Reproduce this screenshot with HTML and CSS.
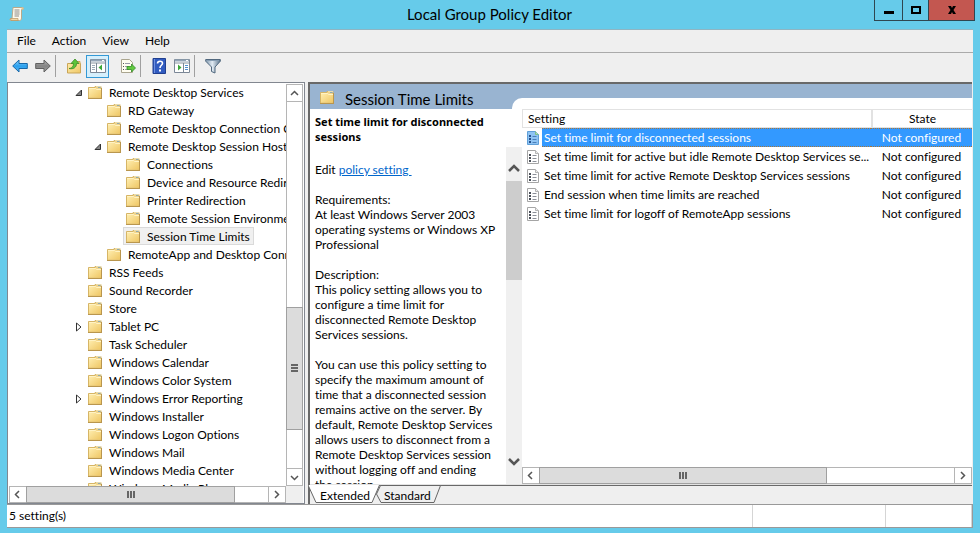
FILE: index.html
```html
<!DOCTYPE html>
<html lang="en">
<head>
<meta charset="utf-8">
<title>Local Group Policy Editor</title>
<link rel="stylesheet" href="styles.css">
</head>
<body>
<svg class="defs" aria-hidden="true">
  <defs>
    <linearGradient id="gold" x1="0" y1="0" x2="1" y2="1"><stop offset="0" stop-color="#ffeeb0"/><stop offset="1" stop-color="#efc765"/></linearGradient>
    <linearGradient id="blue" x1="0" y1="0" x2="0" y2="1"><stop offset="0" stop-color="#8fd8ff"/><stop offset=".5" stop-color="#2ba0ee"/><stop offset="1" stop-color="#55b8f5"/></linearGradient>
    <linearGradient id="grey" x1="0" y1="0" x2="0" y2="1"><stop offset="0" stop-color="#b5b5b5"/><stop offset=".5" stop-color="#848484"/><stop offset="1" stop-color="#a0a0a0"/></linearGradient>
    <linearGradient id="steel" x1="0" y1="0" x2="1" y2="0"><stop offset="0" stop-color="#7e95ab"/><stop offset=".45" stop-color="#e2ebf3"/><stop offset="1" stop-color="#5b748c"/></linearGradient>
    <symbol id="folder" viewBox="0 0 16 16">
      <path d="M1.500 3.500h6.500v-1h6v11.500h-12.500z" fill="#f0d48c" stroke="#d6b566"/>
      <path d="M9 2.500h5" stroke="#e9dcae"/>
      <path d="M11 3.500h2.500" stroke="#8fa9ae"/>
      <path d="M2 4h7l1 1h4v8.500H2z" fill="url(#gold)"/>
      <path d="M2 4.500h6.500l1 1H14" fill="none" stroke="#fff3c4"/>
      <path d="M1 14.500h14M14.500 4v10" stroke="#b9964e"/>
    </symbol>
    <symbol id="policy" viewBox="0 0 14 16">
      <path d="M1.500 1.500h8l3 3v10h-11z" fill="#fff" stroke="#a5a5a5"/>
      <path d="M9.500 1.500v3h3" fill="#eee" stroke="#b5b5b5"/>
      <path d="M3 5h2v2H3zM3 8h2v2H3zM3 11h2v2H3z" fill="#4a4f58"/>
      <path d="M6.500 6.500h4M6.500 9.500h4M6.500 12.500h4" stroke="#8b8f98"/>
    </symbol>
    <symbol id="policy-picked" viewBox="0 0 14 16">
      <path d="M1.500 1.500h8l3 3v10h-11z" fill="#8ec3f3" stroke="#5f9fd8"/>
      <path d="M9.500 1.500v3h3" fill="#b7e0b0" stroke="#7cc08a"/>
      <path d="M3 5h2v2H3zM3 8h2v2H3zM3 11h2v2H3z" fill="#24508a"/>
      <path d="M6.500 6.500h4M6.500 9.500h4M6.500 12.500h4" stroke="#4a7fb8"/>
    </symbol>
    <symbol id="up" viewBox="0 0 15 15"><path d="M4 9l3.500-3.500L11 9" fill="none" stroke="#555" stroke-width="1.500"/></symbol>
    <symbol id="down" viewBox="0 0 15 15"><path d="M4 6l3.500 3.500L11 6" fill="none" stroke="#555" stroke-width="1.500"/></symbol>
    <symbol id="left" viewBox="0 0 15 15"><path d="M9 4L5.500 7.500 9 11" fill="none" stroke="#555" stroke-width="1.500"/></symbol>
    <symbol id="right" viewBox="0 0 15 15"><path d="M6 4l3.500 3.500L6 11" fill="none" stroke="#555" stroke-width="1.500"/></symbol>
    <symbol id="open" viewBox="0 0 8 10"><path d="M1 7.500L6.500 2v5.500z" fill="#888" stroke="#333"/></symbol>
    <symbol id="closed" viewBox="0 0 8 10"><path d="M1.500 1v8L6 5z" fill="#fff" stroke="#333"/></symbol>
  </defs>
</svg>

<header class="titlebar">
  <svg class="app-icon" viewBox="0 0 16 16">
    <path d="M4 1.500h9.500c1.500 0 1.500 2 0 2h-1V12c0 2-1 2.500-2 2.500H2c-1.500 0-1.500-2 0-2h1z" fill="#fdf8ea" stroke="#b9a98b"/>
    <path d="M1.500 12.500h7.500v2H2z" fill="#f1d8a8" stroke="#b79561" stroke-width=".7"/>
    <path d="M5.500 4h5M5.500 6h5M5.500 8h5M5.500 10h4.500" stroke="#8b8b8b"/>
    <path d="M12.500 3.500h1.500l.5-1.500-1-.5h-1z" fill="#e6c68d"/>
  </svg>
  <h1>Local Group Policy Editor</h1>
  <div class="window-buttons">
    <button aria-label="Minimize"><svg viewBox="0 0 12 12"><path d="M1 8.500h10" stroke="#000" stroke-width="3"/></svg></button>
    <button aria-label="Maximize"><svg viewBox="0 0 12 12"><path d="M2 3h8v6H2z" fill="none" stroke="#000" stroke-width="2"/></svg></button>
    <button class="close" aria-label="Close"><svg viewBox="0 0 12 12"><path d="M2 2h3l1 2 1-2h3L7.500 6 10 10H7L6 8l-1 2H2l2.500-4z"/></svg></button>
  </div>
</header>

<main class="window">
  <nav class="menubar">
    <button>File</button><button>Action</button><button>View</button><button>Help</button>
  </nav>
  <div class="toolbar">
    <button aria-label="Back"><svg viewBox="0 0 16 16"><path d="M.7 8L7 2v3.500h8.300v5H7V14z" fill="url(#blue)" stroke="#1767a8"/></svg></button>
    <button aria-label="Forward"><svg viewBox="0 0 16 16"><path d="M15.300 8L9 2v3.500H.7v5H9V14z" fill="url(#grey)" stroke="#606060"/></svg></button>
    <i class="sep"></i>
    <button aria-label="Up one level"><svg viewBox="0 0 16 16"><path d="M1.500 5.500h6l1-2H14v2h.5V15h-13z" fill="url(#gold)" stroke="#c9a558"/><path d="M3 10.500c3 0 4.500-2 4.500-5H5L9 1l4 4.500h-2.500c0 4-3 6-7.500 5z" fill="#5cc53a" stroke="#3b8d24" stroke-width=".8"/></svg></button>
    <button class="active" aria-label="Show console tree"><svg viewBox="0 0 16 16"><path d="M.5 1.500h15v13H.5z" fill="#fff" stroke="#7b8796"/><path d="M1 2.500h14" stroke="#93a4b7" stroke-width="2"/><path d="M1 5h14" stroke="#8793a0"/><path d="M6.500 5v9" stroke="#7b8796"/><path d="M2 7.500h3M2 9.500h3M2 11.500h3" stroke="#9caab7"/><path d="M12 6.500v6L8.500 9.500z" fill="#3ba738"/><path d="M12 2.500h2" stroke="#fff"/></svg></button>
    <button class="export" aria-label="Export list"><svg viewBox="0 0 16 16"><path d="M1.500 1.500h8l3 3v10h-11z" fill="#fffdf0" stroke="#aaa58f"/><path d="M3 5.500h1M3 8.500h1M3 11.500h1" stroke="#555"/><path d="M5 5.500h5M5 8.500h4M5 11.500h4" stroke="#999ba8"/><path d="M7 8.500h4.500V6L15.500 10l-4 4v-2.500H7z" fill="#62ca3f" stroke="#338b26" stroke-width=".8"/></svg></button>
    <i class="sep"></i>
    <button aria-label="Help"><svg viewBox="0 0 16 16"><path d="M2 .500h12.500v15H2z" fill="#315bc0" stroke="#203f8f"/><path d="M3.500 1v14" stroke="#6e90e0"/><path d="M6.500 5.500c0-3 5-3 5-.2 0 2-2.500 2-2.500 4.700" fill="none" stroke="#fff" stroke-width="1.600"/><path d="M8 11.500h2v2H8z" fill="#fff"/></svg></button>
    <button aria-label="Show action pane"><svg viewBox="0 0 16 16"><path d="M.5 1.500h15v13H.5z" fill="#fff" stroke="#7b8796"/><path d="M1 2.500h14" stroke="#93a4b7" stroke-width="2"/><path d="M1 5h14" stroke="#8793a0"/><path d="M9.500 5v9" stroke="#7b8796"/><path d="M11 7.500h3M11 9.500h3M11 11.500h3" stroke="#4f8fd0"/><path d="M4 6.500v6l3.500-3z" fill="#3ba738"/><path d="M12 2.500h2" stroke="#fff"/></svg></button>
    <i class="sep"></i>
    <button aria-label="Filter"><svg viewBox="0 0 16 16"><path d="M.7 1.500h14.600v1.700L10 9v6l-3.500-1.500V9L.7 3.200z" fill="url(#steel)" stroke="#51687e"/><path d="M2 2.500h12" stroke="#879db2"/></svg></button>
  </div>

  <div class="panes">
    <section class="tree-pane">
      <div class="tree-row">
        <ul class="tree">
          <li><svg class="twist"><use href="#open"/></svg><svg class="ico"><use href="#folder"/></svg><span>Remote Desktop Services</span></li>
          <li class="l1"><svg class="ico"><use href="#folder"/></svg><span>RD Gateway</span></li>
          <li class="l1"><svg class="ico"><use href="#folder"/></svg><span>Remote Desktop Connection Client</span></li>
          <li class="l1"><svg class="twist"><use href="#open"/></svg><svg class="ico"><use href="#folder"/></svg><span>Remote Desktop Session Host</span></li>
          <li class="l2"><svg class="ico"><use href="#folder"/></svg><span>Connections</span></li>
          <li class="l2"><svg class="ico"><use href="#folder"/></svg><span>Device and Resource Redirection</span></li>
          <li class="l2"><svg class="ico"><use href="#folder"/></svg><span>Printer Redirection</span></li>
          <li class="l2"><svg class="ico"><use href="#folder"/></svg><span>Remote Session Environment</span></li>
          <li class="l2 selected"><div><svg class="ico"><use href="#folder"/></svg><span>Session Time Limits</span></div></li>
          <li class="l1"><svg class="ico"><use href="#folder"/></svg><span>RemoteApp and Desktop Connections</span></li>
          <li><svg class="ico"><use href="#folder"/></svg><span>RSS Feeds</span></li>
          <li><svg class="ico"><use href="#folder"/></svg><span>Sound Recorder</span></li>
          <li><svg class="ico"><use href="#folder"/></svg><span>Store</span></li>
          <li><svg class="twist"><use href="#closed"/></svg><svg class="ico"><use href="#folder"/></svg><span>Tablet PC</span></li>
          <li><svg class="ico"><use href="#folder"/></svg><span>Task Scheduler</span></li>
          <li><svg class="ico"><use href="#folder"/></svg><span>Windows Calendar</span></li>
          <li><svg class="ico"><use href="#folder"/></svg><span>Windows Color System</span></li>
          <li><svg class="twist"><use href="#closed"/></svg><svg class="ico"><use href="#folder"/></svg><span>Windows Error Reporting</span></li>
          <li><svg class="ico"><use href="#folder"/></svg><span>Windows Installer</span></li>
          <li><svg class="ico"><use href="#folder"/></svg><span>Windows Logon Options</span></li>
          <li><svg class="ico"><use href="#folder"/></svg><span>Windows Mail</span></li>
          <li><svg class="ico"><use href="#folder"/></svg><span>Windows Media Center</span></li>
          <li><svg class="ico"><use href="#folder"/></svg><span>Windows Media Player</span></li>
        </ul>
        <div class="vbar">
          <button aria-label="Scroll up"><svg><use href="#up"/></svg></button>
          <div class="track tree-vtrack"><div class="thumb"><i class="grip"></i></div></div>
          <button aria-label="Scroll down"><svg><use href="#down"/></svg></button>
        </div>
      </div>
      <div class="tree-foot">
        <div class="hbar">
          <button aria-label="Scroll left"><svg><use href="#left"/></svg></button>
          <div class="track tree-htrack"><div class="thumb"><i class="grip"></i></div></div>
          <button aria-label="Scroll right"><svg><use href="#right"/></svg></button>
        </div>
      </div>
    </section>

    <section class="detail-pane">
      <div class="band">
        <h2><svg class="ico"><use href="#folder"/></svg>Session Time Limits</h2>
        <div class="tongue"></div>
      </div>
      <div class="detail">
        <article class="info">
          <h3>Set time limit for disconnected<br>sessions</h3>
          <div class="scroller">
            <div class="text">
              <p>Edit <a href="#policy">policy setting&nbsp;</a></p>
              <p>Requirements:<br>At least Windows Server 2003<br>operating systems or Windows XP<br>Professional</p>
              <p>Description:<br>This policy setting allows you to<br>configure a time limit for<br>disconnected Remote Desktop<br>Services sessions.</p>
              <p>You can use this policy setting to<br>specify the maximum amount of<br>time that a disconnected session<br>remains active on the server. By<br>default, Remote Desktop Services<br>allows users to disconnect from a<br>Remote Desktop Services session<br>without logging off and ending<br>the session.</p>
            </div>
            <div class="flatbar">
              <button aria-label="Scroll text up"><svg viewBox="0 0 12 10"><path d="M1 8l5-5 5 5" fill="none" stroke="#555" stroke-width="2.500"/></svg></button>
              <div class="flat-thumb"></div>
              <button class="end" aria-label="Scroll text down"><svg viewBox="0 0 12 10"><path d="M1 2l5 5 5-5" fill="none" stroke="#555" stroke-width="2.500"/></svg></button>
            </div>
          </div>
        </article>
        <div class="list">
          <table>
            <colgroup><col class="c-icon"><col><col class="c-state"></colgroup>
            <thead><tr><th colspan="2">Setting</th><th>State</th></tr></thead>
            <tbody>
              <tr class="picked"><td><svg><use href="#policy-picked"/></svg></td><td>Set time limit for disconnected sessions</td><td>Not configured</td></tr>
              <tr><td><svg><use href="#policy"/></svg></td><td>Set time limit for active but idle Remote Desktop Services se...</td><td>Not configured</td></tr>
              <tr><td><svg><use href="#policy"/></svg></td><td>Set time limit for active Remote Desktop Services sessions</td><td>Not configured</td></tr>
              <tr><td><svg><use href="#policy"/></svg></td><td>End session when time limits are reached</td><td>Not configured</td></tr>
              <tr><td><svg><use href="#policy"/></svg></td><td>Set time limit for logoff of RemoteApp sessions</td><td>Not configured</td></tr>
            </tbody>
          </table>
          <div class="hbar">
            <button aria-label="Scroll list left"><svg><use href="#left"/></svg></button>
            <div class="track list-htrack"><div class="thumb"><i class="grip"></i></div></div>
            <button aria-label="Scroll list right"><svg><use href="#right"/></svg></button>
          </div>
        </div>
      </div>
      <div class="tabs">
        <svg class="tab-shapes" viewBox="0 0 140 18">
          <path d="M73 17.500L68.500 9l4-8.500h60L126 17.500z" fill="#efefef" stroke="#666"/>
          <path d="M0 0l8 17.500h56L71.500 0z" fill="#fff"/>
          <path d="M0 0l8 17.500h56L71.500 0" fill="none" stroke="#666"/>
        </svg>
        <button>Extended</button><button>Standard</button>
      </div>
    </section>
  </div>

  <footer class="status"><span>5 setting(s)</span><span></span><span></span></footer>
</main>
</body>
</html>
```
FILE: styles.css
```css
* { box-sizing: border-box; }

body {
  margin: 0;
  height: 100vh;
  padding: 0 7px 5px;
  display: flex;
  flex-direction: column;
  background: #66cbea;
  color: #000;
  font: 12px/15px Lato, "Open Sans", sans-serif;
  font-variant-ligatures: none;
  overflow: hidden;
}

button {
  border: 0;
  padding: 0;
  background: none;
  color: inherit;
  font: inherit;
}

svg { display: block; flex: none; }
.defs { position: absolute; width: 0; height: 0; }
ul, h1, h2, h3, p { margin: 0; padding: 0; font-weight: normal; }

/* Title bar */
.titlebar {
  height: 29px;
  flex: none;
  display: grid;
  grid-template-columns: 101px 1fr 104px;
  align-items: center;
  margin-right: -2px;
  padding-bottom: 2px;
}
.app-icon { width: 16px; height: 16px; margin-left: 2px; }
h1 { font-size: 15px; line-height: 20px; text-align: center; }
.window-buttons {
  display: flex;
  align-self: start;
  justify-self: end;
  height: 21px;
  border: 1px solid #2f4650;
  border-top: 0;
}
.window-buttons button { width: 27px; display: grid; place-items: center; }
.window-buttons button + button { width: 26px; border-left: 1px solid #2f4650; }
.window-buttons button.close { width: 46px; background: #c35750; }
.window-buttons svg { width: 12px; height: 12px; }

/* Window frame */
.window {
  flex: 1;
  min-height: 0;
  display: flex;
  flex-direction: column;
  background: #efefef;
  border-top: 1px solid #8fb5c2;
}
.menubar {
  height: 23px;
  flex: none;
  display: flex;
  gap: 16px;
  padding: 0 0 2px 10px;
  border-bottom: 1px solid #aaa;
}
.toolbar {
  height: 29px;
  flex: none;
  display: flex;
  align-items: center;
  padding: 0 1px 3px;
}
.toolbar button { width: 23px; height: 23px; display: grid; place-items: center; }
.toolbar svg { width: 16px; height: 16px; }
.toolbar .active { border: 1px solid #3399d6; background: #d5effc; margin-left: 1px; }
.toolbar .export { margin-left: 7px; }
.sep { width: 1px; height: 22px; background: #a0a0a0; margin: 0 6px 0 1px; }

.panes { flex: 1; min-height: 0; display: flex; gap: 3px; }

/* Scroll bars */
.vbar, .hbar { display: flex; flex: none; background: #fff; border: 1px solid #b5b5b5; }
.vbar { width: 17px; flex-direction: column; margin-top: 1px; }
.hbar { height: 17px; }
.vbar button { height: 16px; flex: none; }
.hbar button { width: 16px; flex: none; }
.vbar button svg, .hbar button svg { width: 15px; height: 15px; }
.track { display: flex; flex: 1; min-height: 0; }
.vbar .track { flex-direction: column; border: solid #b5b5b5; border-width: 1px 0; }
.hbar .track { border: solid #b5b5b5; border-width: 0 1px; }
.thumb { background: #dcdcdc; display: grid; place-items: center; outline: 1px solid #a0a0a0; }
.tree-vtrack .thumb { height: 33%; margin-top: 206px; }
.tree-htrack .thumb { width: 86%; }
.list-htrack .thumb { width: 69%; }
.grip { display: block; width: 8px; height: 7px; background: repeating-linear-gradient(90deg, #666 0 2px, transparent 2px 3px); }
.vbar .grip { width: 7px; height: 8px; background: repeating-linear-gradient(#666 0 2px, transparent 2px 3px); }

/* Tree */
.tree-pane {
  width: 298px;
  flex: none;
  display: flex;
  flex-direction: column;
  border: 1px solid #828790;
  padding: 0 1px;
  background: #fff;
}
.tree-foot { background: #efefef; padding-right: 17px; }
.tree-row { flex: 1; min-height: 0; display: flex; }
.tree { flex: 1; min-width: 0; overflow: hidden; list-style: none; }
.tree li {
  height: 18px;
  display: flex;
  align-items: center;
  padding-left: 78px;
  white-space: nowrap;
}
.tree .l1 { padding-left: 97px; }
.tree .l2 { padding-left: 116px; }
.tree .twist { width: 8px; height: 10px; margin: 2px 4px 0 -12px; }
.ico { width: 16px; height: 16px; }
.tree span { margin-left: 6px; }
.selected div {
  display: flex;
  align-items: center;
  height: 18px;
  margin-left: -2px;
  padding: 0 3px 0 1px;
  border: 1px solid #dadada;
  background: #f0f0f0;
}

/* Details */
.detail-pane {
  flex: 1;
  min-width: 0;
  display: flex;
  flex-direction: column;
  border: solid #696969;
  border-width: 2px 0 0 2px;
  margin-right: 1px;
}
.band { height: 25px; flex: none; display: flex; background: #99b4d1; }
h2 { width: 202px; display: flex; gap: 10px; padding: 5px 0 0 9px; font-size: 15px; line-height: 20px; }
.tongue { flex: 1; height: 11px; align-self: flex-end; background: #fff; border-top-left-radius: 10px; }
.detail { flex: 1; min-height: 0; display: flex; background: #fff; border-bottom: 1px solid #e3e3e3; }
.info { width: 212px; flex: none; display: flex; flex-direction: column; white-space: nowrap; }
h3 { font: bold 11px/15px "Noto Sans", sans-serif; padding: 5px 0 3px 5px; }
.scroller { flex: 1; min-height: 0; display: flex; }
.text { flex: 1; min-width: 0; padding: 15px 0 0 5px; overflow: hidden; }
.text p { margin-bottom: 15px; }
.text a { color: #0066cc; }
.flatbar { width: 16px; flex: none; display: flex; flex-direction: column; background: #f0f0f0; }
.flatbar button { height: 34px; display: grid; place-items: center; padding-top: 8px; }
.flatbar svg { width: 12px; height: 10px; }
.flatbar .end { margin-top: auto; padding: 0; height: 44px; }
.flat-thumb { height: 99px; background: #cdcdcd; }

.list { flex: 1; min-width: 0; display: flex; flex-direction: column; }
.list .hbar { margin-top: auto; }
table { width: 100%; table-layout: fixed; border-collapse: separate; border-spacing: 0; }
.c-icon { width: 20px; }
.c-state { width: 101px; }
th, td { height: 19px; padding: 0; line-height: 17px; white-space: nowrap; font-weight: normal; text-align: left; }
th { border: solid #e2e2e2; border-width: 1px 0 1px 1px; padding-left: 5px; }
th:last-child { text-align: center; border-left-width: 2px; padding: 0; }
td:nth-child(2) { padding-left: 2px; overflow: hidden; }
td:last-child { text-align: center; }
td svg { width: 14px; height: 16px; margin-left: 4px; }
.picked td + td { background: #3399ff; color: #fff; border: dotted #a87638; border-width: 1px 0; line-height: 15px; }

/* Tabs and status */
.tabs {
  height: 19px;
  flex: none;
  position: relative;
  display: flex;
  gap: 14px;
  padding-left: 10px;
  border-top: 1px solid #696969;
}
.tab-shapes { position: absolute; left: -2px; top: -1px; width: 140px; height: 18px; }
.tabs button { position: relative; }
.status {
  height: 24px;
  flex: none;
  display: grid;
  grid-template-columns: 1fr 133px 86px;
  background: #fff;
  border: 1px solid #999;
  border-left-width: 0;
  line-height: 22px;
}
.status span { padding-left: 2px; border-right: 1px solid #d5d5d5; }
```
